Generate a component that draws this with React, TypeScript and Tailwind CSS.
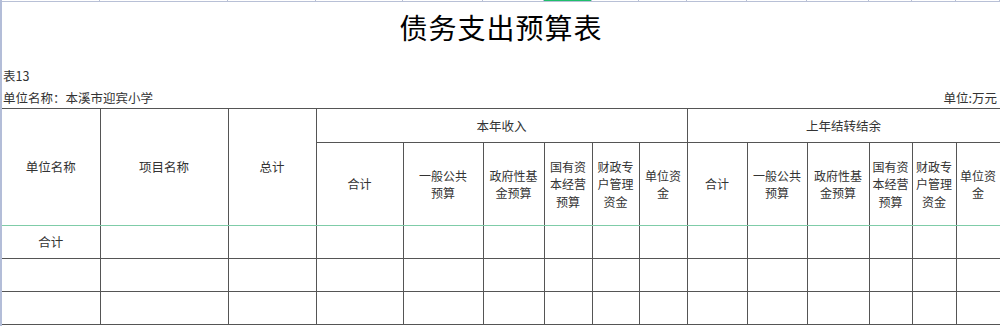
import React from "react"

const cols = [98, 128, 88, 87, 80, 61, 48, 47, 48, 60, 60, 62, 43, 44, 44]

const subHeads: React.ReactNode[] = [
  "合计",
  <>一般公共<br />预算</>,
  <>政府性基<br />金预算</>,
  <>国有资<br />本经营<br />预算</>,
  <>财政专<br />户管理<br />资金</>,
  <>单位资<br />金</>,
]

const cell = "border border-[#555] p-0 text-center align-middle"

export default function App() {
  return (
    <div
      className="w-[1000px] h-[326px] overflow-hidden bg-white border-l-2 border-[#b3bdd8] text-[#333] text-[12.5px] leading-[18px]"
      style={{ fontFamily: '"Noto Sans CJK SC", "Noto Sans", sans-serif' }}
    >
      {/* column tick strip */}
      <div className="flex h-[2px] border-b border-[#b8c0d6]">
        {cols.map((w, i) => (
          <div
            key={i}
            className={i === 6 ? "h-full border-r border-[#b8c0d6] bg-[#1fbf6a]" : "h-full border-r border-[#b8c0d6]"}
            style={{ width: w }}
          />
        ))}
      </div>

      <div className="h-[50px] flex items-center justify-center">
        <span
          className="text-[28px] leading-none text-black tracking-[1px]"
          style={{ fontFamily: '"Noto Sans CJK SC", serif' }}
        >
          债务支出预算表
        </span>
      </div>

      <div className="mt-[13px] h-[22px] flex items-center pl-[1px]">表13</div>
      <div className="h-[21px] flex items-center justify-between pl-[1px] pr-[3px]">
        <span>单位名称：本溪市迎宾小学</span>
        <span>单位:万元</span>
      </div>

      <table className="table-fixed border-collapse w-[998px] border-l-0">
        <colgroup>
          {cols.map((w, i) => (
            <col key={i} style={{ width: w }} />
          ))}
        </colgroup>
        <thead>
          <tr className="h-[34px]">
            <th rowSpan={2} className={`${cell} font-normal border-l-0 border-b-[#7fcca8]`}>单位名称</th>
            <th rowSpan={2} className={`${cell} font-normal border-b-[#7fcca8]`}>项目名称</th>
            <th rowSpan={2} className={`${cell} font-normal border-b-[#7fcca8]`}>总计</th>
            <th colSpan={6} className={`${cell} font-normal`}>本年收入</th>
            <th colSpan={6} className={`${cell} font-normal`}>上年结转结余</th>
          </tr>
          <tr className="h-[83px]">
            {[...subHeads, ...subHeads].map((h, i) => (
              <th key={i} className={`${cell} font-normal whitespace-nowrap border-b-[#7fcca8] text-[12px] leading-[17.5px]`}>
                {h}
              </th>
            ))}
          </tr>
        </thead>
        <tbody>
          {[0, 1, 2].map((r) => (
            <tr key={r} className="h-[33px]">
              {cols.map((_, c) => (
                <td key={c} className={`${cell} ${c === 0 ? "border-l-0" : ""} ${r === 0 ? "border-t-[#7fcca8]" : ""}`}>
                  {r === 0 && c === 0 ? "合计" : ""}
                </td>
              ))}
            </tr>
          ))}
        </tbody>
      </table>
    </div>
  )
}
